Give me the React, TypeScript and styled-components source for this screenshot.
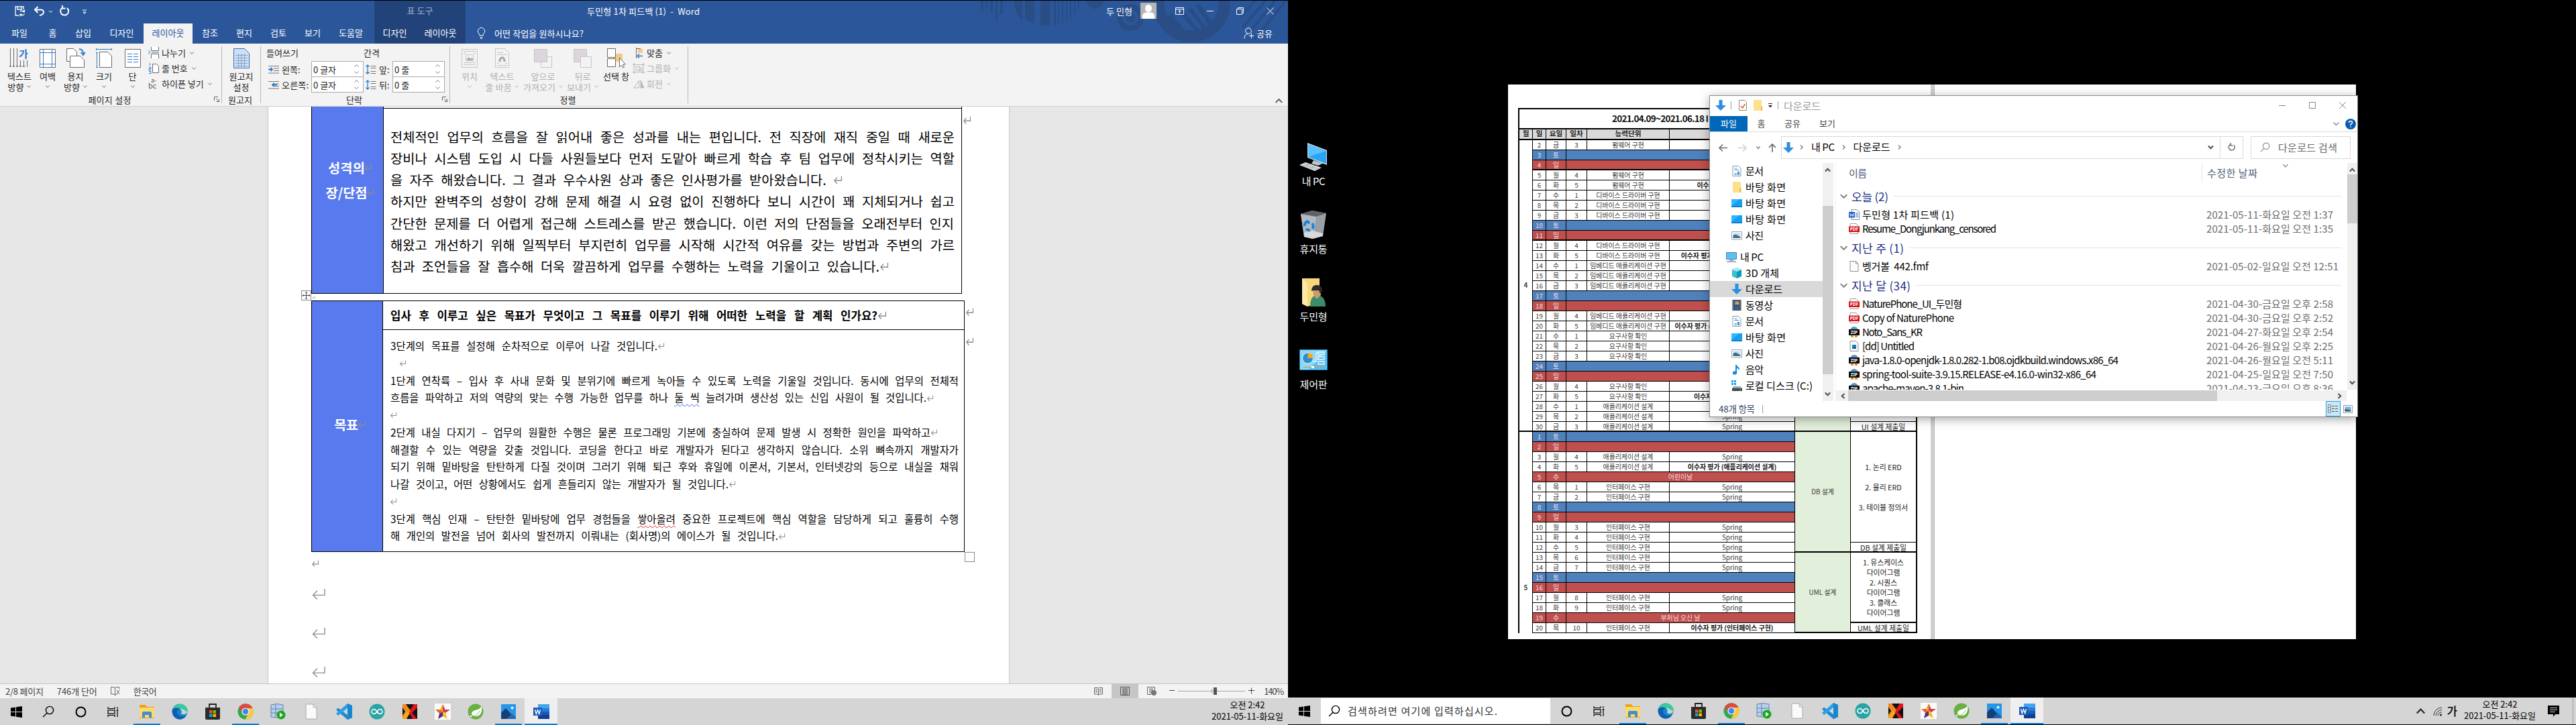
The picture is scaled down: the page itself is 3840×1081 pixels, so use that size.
import React, { ReactNode, useLayoutEffect, useRef, useState } from 'react';
import styled, { createGlobalStyle } from 'styled-components';

const Global = createGlobalStyle`
  html, body { margin: 0; padding: 0; background: #000; }
  * { box-sizing: border-box; }
  body { font-family: "Noto Sans CJK KR", "Noto Sans", sans-serif; font-size: 13px; line-height: 1; overflow: hidden; }
  svg { display: block; flex: none; overflow: visible; }
`;

/* ---------- text that spreads to a given width ---------- */
const FitSpan = styled.span`
  display: inline-block;
  flex: none;
  justify-self: start;
  white-space: pre;
`;

function Fit({ w, words, children }: { w: number; words?: boolean; children: ReactNode }) {
  const ref = useRef<HTMLSpanElement>(null);
  const [gap, setGap] = useState(0);
  useLayoutEffect(() => {
    const el = ref.current;
    if (!el) return;
    const text = el.textContent || '';
    const slots = words ? text.split(' ').length - 1 : text.length - 1;
    if (slots > 0) setGap((w - el.getBoundingClientRect().width) / slots);
  }, []);
  return (
    <FitSpan ref={ref} style={words ? { wordSpacing: gap } : { letterSpacing: gap }}>
      {children}
    </FitSpan>
  );
}

/* ---------- shell ---------- */
const Screens = styled.div`
  display: flex;
  width: 3840px;
  height: 1081px;
  background: #000;
`;
const Monitor = styled.div`
  width: 1920px;
  height: 1081px;
  display: flex;
  flex-direction: column;
`;

/* ---------- Word: title bar and tabs ---------- */
const TitleArea = styled.header`
  position: relative;
  margin-top: 1px;
  height: 64px;
  background: #2b579a;
  color: #fff;
  overflow: hidden;
`;
const TitleArt = styled.svg`
  position: absolute;
  left: 1440px;
  top: 0;
`;
const TitleRow = styled.div`
  position: relative;
  display: flex;
  height: 34px;
`;
const QuickAccess = styled.div`
  width: 558px;
  display: flex;
  align-items: center;
  padding: 0 0 2px 22px;
`;
const ContextTitle = styled.div`
  width: 136px;
  background: #22437a;
  color: #a3b4d0;
  display: flex;
  justify-content: center;
  line-height: 30px;
`;
const DocTitle = styled.div`
  width: 955px;
  padding-left: 181px;
  line-height: 31px;
`;
const Account = styled.div`
  display: flex;
  align-items: center;
  height: 30px;
  gap: 12px;
`;
const Caption = styled.div`
  display: flex;
  align-items: center;
  height: 30px;
  padding-left: 28px;
  gap: 34px;
`;
const TabRow = styled.nav`
  position: relative;
  display: flex;
  height: 30px;
`;
const Tab = styled.div<{ $w: number; $on?: boolean; $ctx?: boolean }>`
  width: ${p => p.$w}px;
  line-height: 28px;
  text-align: center;
  white-space: nowrap;
  background: ${p => (p.$on ? '#f3f3f3' : p.$ctx ? '#22437a' : 'transparent')};
  color: ${p => (p.$on ? '#2b579a' : '#fff')};
`;
const TabGap = styled.div<{ $w: number }>`
  width: ${p => p.$w}px;
`;
const TellMe = styled.div`
  display: flex;
  align-items: center;
  gap: 13px;
  width: 1160px;
  padding-left: 17px;
  padding-bottom: 2px;
`;
const Share = styled.div`
  display: flex;
  align-items: center;
  gap: 4px;
  padding-bottom: 2px;
`;

/* ---------- Word: ribbon ---------- */
const Ribbon = styled.div`
  display: flex;
  height: 94px;
  background: #f3f3f3;
  border-bottom: 1px solid #d0d0d0;
  color: #262626;
`;
const Group = styled.section<{ $w: number }>`
  width: ${p => p.$w}px;
  height: 85px;
  margin-top: 4px;
  border-right: 1px solid #b9b9b9;
`;
const GroupBody = styled.div<{ $pad?: number }>`
  display: flex;
  height: 70px;
  padding-left: ${p => p.$pad || 0}px;
`;
const GroupFoot = styled.div`
  display: grid;
  grid-template-columns: 1fr auto 1fr;
  height: 18px;
  align-items: center;
  padding: 0 3px 0 0;
  & > svg { justify-self: end; }
`;
const BigButton = styled.div<{ $w: number; $off?: boolean; $ml?: number }>`
  width: ${p => p.$w}px;
  margin-left: ${p => p.$ml || 0}px;
  padding-top: 3px;
  display: flex;
  flex-direction: column;
  align-items: center;
  color: ${p => (p.$off ? '#b1b1b1' : '#262626')};
  & > svg { margin-bottom: 3px; }
`;
const BigLine = styled.div`
  display: flex;
  align-items: center;
  gap: 5px;
  height: 16px;
  line-height: 15px;
  white-space: nowrap;
`;
const SmallColumn = styled.div<{ $pad?: number }>`
  margin-top: -2px;
  padding-left: ${p => p.$pad || 0}px;
`;
const SmallRow = styled.div<{ $off?: boolean }>`
  display: flex;
  align-items: center;
  height: 23px;
  gap: 3px;
  white-space: nowrap;
  color: ${p => (p.$off ? '#b1b1b1' : '#262626')};
  & > svg:last-child { margin-left: 3px; }
`;
const FieldColumn = styled.div<{ $w: number }>`
  width: ${p => p.$w}px;
`;
const FieldTitle = styled.div`
  height: 22px;
  line-height: 20px;
`;
const FieldRow = styled.div<{ $label: number }>`
  display: grid;
  grid-template-columns: 20px ${p => p.$label}px 78px;
  align-items: center;
  height: 23px;
  padding-left: 3px;
  white-space: nowrap;
`;
const Spin = styled.div`
  display: flex;
  justify-content: space-between;
  align-items: center;
  height: 24px;
  background: #fff;
  border: 1px solid #ababab;
  padding: 0 6px 0 2px;
  color: #222;
`;
const CollapseRibbon = styled.div`
  display: flex;
  align-items: flex-end;
  margin-left: auto;
  padding: 0 8px 2px 0;
`;

/* ---------- Word: document ---------- */
const Workspace = styled.main`
  height: 860px;
  background: #e6e6e6;
  overflow: hidden;
`;
const Page = styled.article`
  width: 1106px;
  height: 860px;
  margin-left: 399px;
  padding-left: 64px;
  background: #fff;
  border: solid #c6c6c6;
  border-width: 0 1px;
  color: #000;
`;
const TableLine = styled.div`
  position: relative;
  display: flex;
`;
const DocTable = styled.div<{ $w: number; $h: number; $side: number; $top?: boolean }>`
  display: grid;
  grid-template-columns: ${p => p.$side}px 1fr;
  width: ${p => p.$w}px;
  height: ${p => p.$h}px;
  border: solid #000;
  border-width: ${p => (p.$top ? 1 : 0)}px 1px 1px 1px;
`;
const SideCell = styled.div`
  background: #587aee;
  color: #fff;
  font-weight: 700;
  font-size: 19.8px;
  line-height: 37px;
  display: flex;
  flex-direction: column;
  align-items: center;
  border-right: 1px solid #000;
  padding-right: 2px;
`;
const SideLine = styled.div`
  display: flex;
  align-items: center;
  padding-left: 9px;
`;
const TextCell = styled.div`
  padding: 26px 0 0 10px;
  margin-top: 2px;
  border-top: 1px solid #000;
  font-size: 19.8px;
`;
const Line = styled.div<{ $h: number; $in?: number }>`
  display: flex;
  align-items: center;
  height: ${p => p.$h}px;
  line-height: ${p => p.$h}px;
  padding-left: ${p => p.$in || 0}px;
  gap: 1px;
`;
const GoalHead = styled.div`
  height: 43px;
  padding-left: 11px;
  border-bottom: 1px solid #000;
  font-size: 16.8px;
  font-weight: 700;
`;
const GoalBody = styled.div`
  padding: 11px 0 0 11px;
  font-size: 15.4px;
`;
const Wavy = styled.span<{ $c: string }>`
  text-decoration: underline wavy ${p => p.$c} 1.3px;
  text-underline-offset: 3px;
  text-decoration-skip-ink: none;
`;
const RowMarks = styled.div<{ $top: number; $gap?: number }>`
  display: flex;
  flex-direction: column;
  gap: ${p => p.$gap || 0}px;
  padding: ${p => p.$top}px 0 0 2px;
`;
const MoveHandle = styled.div`
  position: absolute;
  left: -15px;
  top: 274px;
  width: 15px;
  height: 15px;
  background: #fff;
  border: 1px solid #8a8a8a;
`;
const SizeHandle = styled.div`
  position: absolute;
  left: 974px;
  top: 375px;
  width: 15px;
  height: 15px;
  border: 1px solid #8a8a8a;
  background: #fff;
`;
const BetweenTables = styled.div`
  height: 10px;
  padding: 3px 0 0 2px;
`;
const Tail = styled.div`
  padding: 12px 0 0 1px;
  & > svg { margin-bottom: 41px; }
  & > svg:first-child { margin-bottom: 32px; }
`;

/* ---------- Word: status bar ---------- */
const StatusBar = styled.footer`
  display: flex;
  align-items: center;
  height: 22px;
  background: #f3f3f3;
  border-top: 1px solid #c6c6c6;
  color: #444;
  padding: 0 7px 1px 8px;
  white-space: nowrap;
`;
const StatusLeft = styled.div`
  display: flex;
  align-items: center;
  gap: 20px;
  flex: 1;
`;
const ViewButton = styled.div<{ $on?: boolean }>`
  display: flex;
  align-items: center;
  justify-content: center;
  width: 40px;
  height: 22px;
  background: ${p => (p.$on ? '#c6c6c6' : 'transparent')};
`;
const Zoom = styled.div`
  display: flex;
  align-items: center;
  padding-left: 6px;
`;
const PercentText = styled.div`
  margin-left: 14px;
`;

/* ---------- taskbar ---------- */
const Bar = styled.div`
  display: flex;
  height: 40px;
  background: #d5d5d5;
  color: #000;
`;
const Slot = styled.div<{ $w?: number }>`
  width: ${p => p.$w || 48}px;
  display: flex;
  align-items: center;
  justify-content: center;
`;
const AppSlot = styled.div<{ $on?: boolean; $open?: boolean }>`
  width: 49px;
  height: 40px;
  display: flex;
  flex-direction: column;
  align-items: center;
  justify-content: space-between;
  padding-top: 8px;
  background: ${p => (p.$on ? '#efefef' : 'transparent')};
  &::after {
    content: '';
    width: ${p => (p.$on ? 49 : 40)}px;
    height: 2px;
    background: ${p => (p.$on || p.$open ? '#0a78d4' : 'transparent')};
  }
`;
const AppStrip = styled.div`
  display: flex;
  margin-left: 2px;
`;
const SearchBox = styled.div`
  display: flex;
  align-items: center;
  gap: 11px;
  width: 342px;
  height: 38px;
  margin: 1px 0 0 1px;
  padding: 0 0 1px 11px;
  background: #fff;
  font-size: 15px;
  color: #333;
`;
const Tray = styled.div`
  display: flex;
  margin-left: auto;
  align-items: center;
`;
const Clock = styled.div<{ $right: number }>`
  display: flex;
  flex-direction: column;
  align-items: center;
  line-height: 17px;
  padding-bottom: 4px;
  margin-right: ${p => p.$right}px;
`;
const Ime = styled.div`
  font-size: 17px;
  font-weight: 500;
  margin: 0 10px 0 7px;
  line-height: 36px;
`;
const Notice = styled.div`
  display: flex;
  height: 40px;
  width: 38px;
  align-items: center;
  border-right: 1px solid #9a9a9a;
  margin-right: 4px;
`;

/* ---------- desktop ---------- */
const Desktop = styled.div`
  position: relative;
  height: 1040px;
  background: #000;
  overflow: hidden;
`;
const DesktopIcons = styled.div`
  width: 76px;
  padding-top: 212px;
`;
const DesktopIcon = styled.div`
  display: flex;
  flex-direction: column;
  align-items: center;
  height: 101px;
  color: #fff;
  font-size: 15px;
  line-height: 28px;
`;
const Photo = styled.div`
  position: absolute;
  left: 328px;
  top: 126px;
  width: 1264px;
  height: 827px;
  background: #fff;
  display: flex;
`;
const PhotoPage = styled.div`
  width: 630px;
  padding: 35px 0 0 15px;
`;
const PhotoDivider = styled.div`
  width: 6px;
  background: #cfcfcf;
  border-right: 1px solid #bdbdbd;
`;
const Calendar = styled.div`
  display: grid;
  grid-template-columns: 20px 20px 30px 31px 123px 187px 83px 99px;
  grid-template-rows: 30px 16px repeat(49, 15px);
  width: 595px;
  border-left: 2px solid #000;
  border-top: 2px solid #000;
  font-size: 9.9px;
  line-height: 15px;
  color: #3c3c3c;
`;
const Cell = styled.div<{
  $c: number; $r: number; $cs?: number; $rs?: number; $bg?: string; $fg?: string;
  $b?: boolean; $thick?: boolean; $pt?: number; $open?: boolean; $center?: boolean; $rt?: boolean; $head?: boolean;
}>`
  grid-column: ${p => p.$c} / span ${p => p.$cs || 1};
  grid-row: ${p => p.$r} / span ${p => p.$rs || 1};
  background: ${p => p.$bg || 'transparent'};
  color: ${p => p.$fg || 'inherit'};
  font-weight: ${p => (p.$b ? 700 : 400)};
  border-right: ${p => (p.$rt ? 2 : 1)}px solid #000;
  border-bottom: ${p => (p.$open ? 0 : p.$thick ? 2 : 1)}px solid #000;
  padding-top: ${p => p.$pt || 0}px;
  text-align: center;
  white-space: nowrap;
  min-width: 0;
  min-height: 0;
  ${p => p.$rt && 'font-size: 10.8px; color: #222;'}
  ${p => p.$head && 'font-size: 10.6px; line-height: 12px;'}
  ${p => p.$center && 'display: flex; flex-direction: column; justify-content: center;'}
`;
const CalTitle = styled.div`
  grid-column: 1 / span 8;
  grid-row: 1;
  border-bottom: 2px solid #000;
  border-right: 2px solid #000;
  padding-left: 138px;
  font-size: 13.5px;
  font-weight: 700;
  line-height: 27px;
  color: #111;
`;
const Spaced = styled.div`
  line-height: 30px;
`;

/* ---------- explorer ---------- */
const Explorer = styled.div`
  position: absolute;
  left: 628px;
  top: 142px;
  width: 967px;
  height: 480px;
  background: #fff;
  border: 1px solid #8c8c8c;
  box-shadow: 0 3px 14px rgba(0, 0, 0, 0.35);
  font-size: 15px;
  color: #000;
  white-space: nowrap;
`;
const ExTitle = styled.div`
  display: flex;
  align-items: center;
  height: 30px;
  padding: 0 17px 2px 8px;
  color: #999;
`;
const ExDivider = styled.i<{ $l: number; $r: number }>`
  width: 1px;
  height: 12px;
  background: #9a9a9a;
  margin: 0 ${p => p.$r}px 0 ${p => p.$l}px;
`;
const ExWinButtons = styled.div`
  display: flex;
  align-items: center;
  gap: 35px;
  margin-left: auto;
`;
const ExTabs = styled.div`
  display: flex;
  height: 24px;
  font-size: 13px;
  line-height: 22px;
  color: #444;
  border-bottom: 1px solid #dadbdc;
  margin-bottom: 6px;
`;
const ExTab = styled.div<{ $w: number; $on?: boolean }>`
  width: ${p => p.$w}px;
  height: 23px;
  text-align: center;
  background: ${p => (p.$on ? '#0067b8' : 'transparent')};
  color: ${p => (p.$on ? '#fff' : '#444')};
`;
const ExTabsEnd = styled.div`
  display: flex;
  align-items: center;
  gap: 9px;
  margin-left: auto;
  padding-right: 2px;
`;
const AddressRow = styled.div`
  display: flex;
  height: 34px;
  align-items: center;
  padding-left: 13px;
  margin-bottom: 6px;
`;
const NavArrows = styled.div`
  display: flex;
  align-items: center;
  width: 93px;
`;
const AddressBox = styled.div`
  display: flex;
  align-items: center;
  width: 689px;
  height: 34px;
  border: 1px solid #d9d9d9;
  padding: 0 0 1px 2px;
`;
const Crumb = styled.span`
  margin: 0 10px 2px 11px;
`;
const AddressEnd = styled.div`
  display: flex;
  align-items: center;
  margin-left: auto;
  height: 33px;
`;
const Refresh = styled.div`
  display: flex;
  align-items: center;
  justify-content: center;
  width: 34px;
  height: 33px;
  margin-left: 9px;
  border-left: 1px solid #d9d9d9;
`;
const ExSearch = styled.div`
  display: flex;
  align-items: center;
  width: 149px;
  height: 34px;
  gap: 12px;
  margin-left: 11px;
  padding: 0 0 2px 13px;
  border: 1px solid #d9d9d9;
  color: #6d6d6d;
`;
const ExBody = styled.div`
  display: flex;
  height: 355px;
`;
const NavPane = styled.div`
  width: 168px;
`;
const NavItem = styled.div<{ $root?: boolean; $on?: boolean }>`
  display: flex;
  align-items: center;
  gap: 5px;
  height: 24px;
  width: 168px;
  margin-top: ${p => (p.$root ? 8 : 0)}px;
  padding: 0 0 1px ${p => (p.$root ? 24 : 32)}px;
  background: ${p => (p.$on ? '#d9d9d9' : 'transparent')};
`;
const VScroll = styled.div<{ $h: number; $top: number; $len: number; $w: number }>`
  width: ${p => p.$w}px;
  height: ${p => p.$h}px;
  background: #f0f0f0;
  display: flex;
  flex-direction: column;
  align-items: center;
  justify-content: space-between;
  padding: 6px 0;
  position: relative;
  &::before {
    content: '';
    position: absolute;
    left: 0;
    top: ${p => p.$top}px;
    width: 100%;
    height: ${p => p.$len}px;
    background: #cdcdcd;
  }
`;
const ListArea = styled.div`
  width: 779px;
  border-left: 1px solid #f0f0f0;
  margin-left: 3px;
`;
const ListTop = styled.div`
  display: flex;
  height: 338px;
`;
const List = styled.div`
  width: 762px;
  height: 338px;
  overflow: hidden;
`;
const ListHead = styled.div`
  display: flex;
  height: 29px;
  line-height: 29px;
  padding-left: 19px;
  color: #4c607a;
`;
const HeadName = styled.div`
  width: 526px;
`;
const HeadDate = styled.div`
  position: relative;
  border-left: 1px solid #e5e5e5;
  padding-left: 7px;
  flex: 1;
  & > svg { position: absolute; left: 120px; top: 0; }
`;
const GroupRow = styled.div<{ $first?: boolean }>`
  display: flex;
  align-items: center;
  height: 30px;
  margin-top: ${p => (p.$first ? 6 : 3.5)}px;
  margin-bottom: 1.5px;
  padding: 0 9px 1px 6px;
  gap: 6px;
  font-size: 17px;
  color: #1e3287;
  &::after {
    content: '';
    flex: 1;
    height: 1px;
    background: #e2e2e2;
    margin-left: 2px;
  }
`;
const FileRow = styled.div`
  display: grid;
  grid-template-columns: 20px 513px 1fr;
  align-items: center;
  height: 21px;
  line-height: 20px;
  padding-left: 19px;
`;
const FileDate = styled.span`
  color: #6d6d6d;
`;
const HScroll = styled.div`
  display: flex;
  align-items: center;
  justify-content: space-between;
  width: 761px;
  height: 16px;
  margin-top: 1px;
  padding: 0 6px;
  background: linear-gradient(#cdcdcd, #cdcdcd) 18px 0 / 550px 100% no-repeat, #f0f0f0;
`;
const ExStatus = styled.div`
  display: flex;
  align-items: center;
  height: 23px;
  padding-left: 13px;
  font-size: 13.5px;
  color: #33475e;
`;
const ViewIcon = styled.div<{ $on?: boolean }>`
  display: flex;
  align-items: center;
  justify-content: center;
  width: 22px;
  height: 23px;
  background: ${p => (p.$on ? '#cce8f6' : 'transparent')};
  border: ${p => (p.$on ? '1px solid #26a0da' : 'none')};
`;

/* ---------- small drawings ---------- */
const Chevron = ({ c = '#666', s = 6, d = 'down' }: { c?: string; s?: number; d?: string }) => {
  const rot: Record<string, number> = { down: 0, up: 180, left: 90, right: -90 };
  return (
    <svg width={s} height={s} viewBox="0 0 8 8">
      <path d="M0.5 2.2L4 5.8L7.5 2.2" fill="none" stroke={c} strokeWidth={1.3} transform={`rotate(${rot[d]} 4 4)`} />
    </svg>
  );
};
const BoldChevron = ({ d }: { d: string }) => {
  const rot: Record<string, number> = { down: 0, up: 180, left: 90, right: -90 };
  return (
    <svg width={9} height={9} viewBox="0 0 8 8">
      <path d="M0.8 2.2L4 5.6L7.2 2.2" fill="none" stroke="#505050" strokeWidth={1.8} transform={`rotate(${rot[d]} 4 4)`} />
    </svg>
  );
};
const Return = ({ w = 10, h = 11 }: { w?: number; h?: number }) => (
  <svg width={w} height={h} viewBox="0 0 20 18" preserveAspectRatio="none">
    <path d="M19 1V11H2M8 4L1.5 11L8 17.5" fill="none" stroke="#8c8c8c" strokeWidth={w > 15 ? 1.4 : 2.2} />
  </svg>
);
const Launcher = () => (
  <svg width="8" height="8" viewBox="0 0 8 8">
    <path d="M0.5 6V0.5H6M3 3L7 7M7.5 3.5V7.5H3.5" fill="none" stroke="#666" />
  </svg>
);
const Spinner = () => (
  <svg width="7" height="16" viewBox="0 0 7 16">
    <path d="M0.5 4.5L3.5 1.5L6.5 4.5M0.5 11.5L3.5 14.5L6.5 11.5" fill="none" stroke="#777" />
  </svg>
);

const TitleDecoration = () => (
  <TitleArt width="480" height="64" viewBox="1440 0 480 64">
    <g fill="#294d84">
      <path d="M1462 0h4v16h-4zM1469 0h3v12h-3zM1476 0h4v18h-4zM1484 0h3v32h-3zM1491 0h4v20h-4z" />
      <path d="M1511 0H1524V29Q1514 22 1511 0zM1528 0H1542V34L1528 28zM1551 0H1565V37H1551zM1571 0h3v36h-3zM1577 0h2v35h-2zM1583 0h2v33h-2zM1589 0h2v30h-2zM1595 0h2v26h-2zM1601 0h2v21h-2zM1607 0h2v12h-2z" />
      <circle cx="1632" cy="-1" r="13" />
      <circle cx="1685" cy="25" r="7" />
      <path d="M1760 20L1790 56L1796 54L1764 14zM1771 14L1799 51L1804 48L1776 10zM1782 8L1807 44L1811 38L1788 4zM1740 24L1766 56L1776 57L1746 18z" />
    </g>
    <circle cx="1685" cy="25" r="16" fill="none" stroke="#294d84" strokeWidth="8" />
    <circle cx="1776" cy="4" r="49" fill="none" stroke="#294d84" strokeWidth="17" />
    <path d="M1852 40L1890 -4M1862 48L1904 -4M1870 58L1920 -4M1850 24L1874 -4" stroke="#294d84" strokeWidth="4" />
  </TitleArt>
);

const SheetIcon = ({ off, children, w = 24 }: { off?: boolean; children?: ReactNode; w?: number }) => (
  <svg width={w} height="30" viewBox={`0 0 ${w} 30`} fill="none" stroke={off ? '#c9c5c9' : '#6a6a6a'}>
    {children}
  </svg>
);

/* ---------- taskbar drawings ---------- */
const WinLogo = () => (
  <svg width="17" height="17" viewBox="0 0 17 17">
    <path d="M0 2.5L7 1.5V8H0zM8 1.3L17 0V8H8zM0 9H7V15.5L0 14.5zM8 9H17V17L8 15.7z" />
  </svg>
);
const Magnifier = ({ c = '#000', s = 18 }: { c?: string; s?: number }) => (
  <svg width={s} height={s} viewBox="0 0 18 18" fill="none" stroke={c} strokeWidth={1.4}>
    <circle cx="11" cy="7" r="5.6" />
    <path d="M7 11.2L1 17" />
  </svg>
);
const Cortana = () => (
  <svg width="17" height="17" viewBox="0 0 17 17">
    <circle cx="8.5" cy="8.5" r="7" fill="none" stroke="#000" strokeWidth="2" />
  </svg>
);
const TaskView = () => (
  <svg width="17" height="17" viewBox="0 0 17 17" fill="none" stroke="#000" strokeWidth="1.2">
    <path d="M1 1V3.5H11V1M1 16V13.5H11V16M1 5.8H11V11.2H1zM15 1V4M15 8V16" />
    <path d="M13.8 5h2.4v2.4h-2.4z" fill="#000" stroke="none" />
  </svg>
);
const apps: { open?: boolean; on?: boolean; art: ReactNode }[] = [
  { open: true, art: <g><path d="M1 2h9l2 3h11v17H1z" fill="#e8a317" /><path d="M1 6h22v15H1z" fill="#ffd866" /><path d="M5 21v-7q0-2 2-2h10q2 0 2 2v7h-4v-4H9v4z" fill="#3d8fd8" /></g> },
  { art: <g><circle cx="12" cy="12" r="11.5" fill="#1583d0" /><path d="M1 9C3 1 12-1 18 2c5 3 7 8 5 12-2 3-7 3-9 1 2-4 0-8-5-8-4 0-7 1-8 2z" fill="#3cc8a0" /><path d="M1 9C5 5 10 6 12 8c-4 1-5 5-3 8 3 4 8 4 12 2-3 5-9 7-14 4C2 19 0 14 1 9z" fill="#0f5fb0" /><path d="M14 15c2-3 0-6-2-7 4-1 7 3 11 4 0 4-6 5-9 3z" fill="#d5d5d5" opacity="0.9" /></g> },
  { art: <g><path d="M7 6V1h10v5" fill="none" stroke="#222" strokeWidth="1.8" /><path d="M1 6h22v16q0 2-2 2H3q-2 0-2-2z" fill="#2b2b2b" /><path d="M7 10h4.5v4.5H7z" fill="#f25022" /><path d="M12.5 10H17v4.5h-4.5z" fill="#7fba00" /><path d="M7 15.5h4.5V20H7z" fill="#00a4ef" /><path d="M12.5 15.5H17V20h-4.5z" fill="#ffb900" /></g> },
  { open: true, art: <g><circle cx="12" cy="12" r="11.5" fill="#2fa84f" /><path d="M2 6A11.5 11.5 0 0 1 22.5 7H12L7 14z" fill="#dd4b3e" /><path d="M22.5 7A11.5 11.5 0 0 1 11.5 23.5L17 14 15 7z" fill="#fdc93a" /><circle cx="12" cy="12" r="5.6" fill="#fff" /><circle cx="12" cy="12" r="4.4" fill="#4285f4" /></g> },
  { art: <g><path d="M1 2q9-3 18 0v18q-9 2-18 0z" fill="#b9cfe8" stroke="#5c83b4" strokeWidth="1" /><path d="M1 8h18M1 14h18M8 1v19" stroke="#5c83b4" strokeWidth="1" /><circle cx="16" cy="17" r="6.5" fill="#17a817" /><path d="M14 13.5l5 3.5-5 3.5z" fill="#fff" /></g> },
  { art: <g><path d="M4 1h11l5 5v17H4z" fill="#fafafa" stroke="#9a9a9a" strokeWidth="0.8" /><path d="M15 1v5h5" fill="none" stroke="#9a9a9a" strokeWidth="0.8" /></g> },
  { art: <g><path d="M17 0L24 3V21L17 24L0 9.500L3 6.500L17 17z" fill="#1f8ad2" /><path d="M0 15L17 0V7L3 18z" fill="#2a9fe8" /><path d="M17 7v10l-6-5z" fill="#d5d5d5" /><path d="M17 0l7 3v18l-7 3z" fill="#1a86cf" /></g> },
  { art: <g><circle cx="12" cy="12" r="11.5" fill="#2aa3a5" /><path d="M12 12c-2-3-3-3.5-4.5-3.5a3.500 3.500 0 0 0 0 7c1.500 0 2.500-.5 4.500-3.500s3-3.500 4.500-3.500a3.500 3.500 0 0 1 0 7C15 15.500 14 15 12 12z" fill="none" stroke="#fff" strokeWidth="1.5" /></g> },
  { art: <g><path d="M1 1h22v22H1z" fill="#111" /><path d="M1 1h5l8 11-8 11H1V18l4-6-4-6z" fill="#f08a1d" /><path d="M1 23L7 11l4 4-4 8z" fill="#f7a51c" /><path d="M23 1h-5l-6 9 3 4 8-8z" fill="#e3151c" /><path d="M13 11l10 12h-7l-5-9z" fill="#d3131b" /></g> },
  { art: <g><path d="M0 0h24v24H0z" fill="#fafafa" /><path d="M12 1l3 8-3 3-4-3z" fill="#f2b01e" /><path d="M12 1l3.5 8H23l-7 5-4-2z" fill="#d93a4a" /><path d="M1 9h7l4 3-5 3z" fill="#e8662a" /><path d="M7 15l5-3v7l-7 4z" fill="#5a2a86" /><path d="M12 12l4 2 3 9-7-4z" fill="#f0c020" /></g> },
  { art: <g><circle cx="12" cy="12" r="11.5" fill="#68b042" /><path d="M21 4c1 8-1 15-9 15-3 0-5-1-6-3 0-8 10-4 15-12z" fill="#fff" /><path d="M3 20c6 1 12-3 15-9" fill="none" stroke="#68b042" strokeWidth="1" /><circle cx="5" cy="19" r="1.3" fill="#fff" /></g> },
  { open: true, art: <g><path d="M1 1h22v22H1z" fill="#2496e8" /><path d="M1 14l7-7 15 16H1z" fill="#173f77" /><path d="M9 23l8-8 6 6v2z" fill="#2664b5" /><circle cx="17.5" cy="6.5" r="2" fill="#e8f6ff" /></g> },
  { on: true, art: <g><path d="M7 1h17v22H7z" fill="#2b7cd3" /><path d="M7 1h17v6H7z" fill="#41a5ee" /><path d="M7 12h17v5.5H7z" fill="#185abd" /><path d="M7 17h17v6H7z" fill="#103f91" /><path d="M0 6h13v12H0z" fill="#185abd" /><path d="M2.5 9l1.8 6.5L6.500 9.500l2.200 6L10.500 9" fill="none" stroke="#fff" strokeWidth="1.4" /></g> },
];
const Apps = () => (
  <AppStrip>
    {apps.map((a, i) => (
      <AppSlot key={i} $on={a.on} $open={a.open}>
        <svg width="24" height="24" viewBox="0 0 24 24">{a.art}</svg>
      </AppSlot>
    ))}
  </AppStrip>
);

/* ---------- explorer drawings ---------- */
const DownArrow = ({ s = 16 }: { s?: number }) => (
  <svg width={s} height={s} viewBox="0 0 16 16">
    <path d="M5.5 0h5v8H16l-8 8-8-8h5.5z" fill="#2f8de0" />
  </svg>
);
const Icons: Record<string, ReactNode> = {
  doc: <g><path d="M2 .5h8.5L14 4v11.5H2z" fill="#fff" stroke="#8b98a5" /><path d="M4.5 4h4M4.5 6.5h7M4.5 11.5h3.5M4.5 13.5h3.5" stroke="#2c93dd" /><path d="M9 9h3v5H9z" fill="#4a90c8" /></g>,
  folder: <g><path d="M2 0h12v16H2z" fill="#ffe08a" /><path d="M12 10l2.5-1V16H12z" fill="#e9bb4a" /></g>,
  desk: <g><path d="M0 2h16v12H0z" fill="#12a0f5" /><path d="M0 12.5h16V14H0z" fill="#0b6fb5" /><path d="M0 12L12 2H0z" fill="#35b5ff" /></g>,
  photo: <g><path d="M.5 2.5h15V14H.5z" fill="#fff" stroke="#98a2ab" /><path d="M2.5 4.5h11V12h-11z" fill="#bfe0f5" /><path d="M2.5 8l4-1.5 7 4V12h-11z" fill="#3f6f84" /></g>,
  pc: <g><path d="M.5 1.5h15v10H.5z" fill="#5cc0f5" stroke="#3a86b5" /><path d="M5 12.5h6V14H5zM1 14.5h14V16H1z" fill="#8a99a5" /></g>,
  cube: <g><path d="M8 0l7 3v10l-7 3-7-3V3z" fill="#3bc0d0" /><path d="M8 6l7-3v10l-7 3z" fill="#0f9bb5" /><path d="M1 3l7-3 7 3-7 3z" fill="#a5e8ee" /></g>,
  down: <path d="M5.5 0h5v8H16l-8 8-8-8h5.5z" fill="#2f8de0" />,
  film: <g><path d="M1.5 0h13v16h-13z" fill="#3b3b3b" /><path d="M4.5 1h7v6.5h-7z" fill="#3f7fc8" /><path d="M4.5 8.500h7V15h-7z" fill="#2e5fa5" /><path d="M5.5 5l3-3 3 3v2h-6z" fill="#e0a53a" /><path d="M3 1v14M13 1v14" stroke="#ddd" strokeDasharray="1.5 1.5" /></g>,
  music: <g><path d="M7 1v11" stroke="#1a8fe0" strokeWidth="2" /><path d="M7 0c1 4 6 4 5 9-1-2-3-3-5-3z" fill="#1a8fe0" /><ellipse cx="5" cy="13" rx="3.2" ry="2.7" fill="#1a8fe0" /></g>,
  disk: <g><path d="M0 0h3v3H0zM4 0h3v3H4zM0 4h3v3H0zM4 4h3v3H4z" fill="#18a5ee" /><path d="M3 9h10l3 3v4H1v-4z" fill="#9aa3aa" /><path d="M1 12h15v4H1z" fill="#40474d" /><path d="M12 13.5h2v1h-2z" fill="#5de05d" /></g>,
  word: <g><path d="M4 .5h8L15.5 4v11.5H4z" fill="#fff" stroke="#7f8b98" /><path d="M10 6h4M10 8.5h4M10 11h4" stroke="#2b6cc4" /><path d="M0 4h9v8.5H0z" fill="#1f5fbf" /><path d="M1.5 6l1.3 4.5L4.5 7l1.7 3.5L7.5 6" fill="none" stroke="#fff" /></g>,
  file: <g><path d="M2 .5h8.5L14 4v11.5H2z" fill="#fbfbfb" stroke="#8f8f8f" /><path d="M10.5.5V4H14" fill="none" stroke="#8f8f8f" /></g>,
  image: <g><path d="M2 .5h8.5L14 4v11.5H2z" fill="#fbfbfb" stroke="#8f8f8f" /><path d="M5 6h6v6H5z" fill="#1b7fd0" /><path d="M5 12l3-3 3 3z" fill="#0d4a86" /></g>,
};
const IconText = styled.text`
  font: 700 6.5px "Noto Sans", sans-serif;
  fill: #fff;
  text-anchor: middle;
`;
const FileIcon = ({ k }: { k: string }) => (
  <svg width="16" height="16" viewBox="0 0 16 16">
    {k === 'pdf' ? (
      <g>
        <path d="M2 .5h9L14 4v11.5H2z" fill="#fff" stroke="#9a9a9a" />
        <path d="M0 4.5h16V13H0z" fill="#d8131b" />
        <IconText x="8" y="11.2">PDF</IconText>
      </g>
    ) : k === 'zip' ? (
      <g>
        <ellipse cx="8" cy="6" rx="6" ry="6" fill="#5c93b8" />
        <path d="M3 13h4v3H3zM9 13h4v3H9z" fill="#e59a2c" />
        <path d="M0 4h16v9H0z" fill="#0c0c0c" />
        <IconText x="8" y="11">ZIP</IconText>
      </g>
    ) : (
      Icons[k]
    )}
  </svg>
);

/* ---------- data ---------- */
const navItems: [string, string, number][] = [
  ['doc', '문서', 27], ['folder', '바탕 화면', 60], ['desk', '바탕 화면', 60], ['desk', '바탕 화면', 60], ['photo', '사진', 27],
  ['pc', '내 PC', 35], ['cube', '3D 개체', 50], ['down', '다운로드', 55], ['film', '동영상', 41], ['doc', '문서', 27],
  ['desk', '바탕 화면', 60], ['photo', '사진', 27], ['music', '음악', 27], ['disk', '로컬 디스크 (C:)', 100],
];
type FileEntry = [string, string, number, string, number];
const fileGroups: { title: string; w: number; files: FileEntry[] }[] = [
  { title: '오늘 (2)', w: 55, files: [
    ['word', '두민형 1차 피드백 (1)', 137, '2021-05-11-화요일 오전 1:37', 189],
    ['pdf', 'Resume_Dongjunkang_censored', 200, '2021-05-11-화요일 오전 1:35', 189],
  ] },
  { title: '지난 주 (1)', w: 78, files: [['file', '벵거볼  442.fmf', 99, '2021-05-02-일요일 오전 12:51', 197]] },
  { title: '지난 달 (34)', w: 88, files: [
    ['pdf', 'NaturePhone_UI_두민형', 149, '2021-04-30-금요일 오후 2:58', 189],
    ['pdf', 'Copy of NaturePhone', 137, '2021-04-30-금요일 오후 2:52', 189],
    ['zip', 'Noto_Sans_KR', 90, '2021-04-27-화요일 오후 2:54', 189],
    ['image', '[dd] Untitled', 78, '2021-04-26-월요일 오후 2:25', 189],
    ['zip', 'java-1.8.0-openjdk-1.8.0.282-1.b08.ojdkbuild.windows.x86_64', 382, '2021-04-26-월요일 오전 5:11', 189],
    ['zip', 'spring-tool-suite-3.9.15.RELEASE-e4.16.0-win32-x86_64', 349, '2021-04-25-일요일 오전 7:50', 189],
    ['zip', 'apache-maven-3.8.1-bin', 152, '2021-04-23-금요일 오후 8:36', 189],
  ] },
];

const FW = '펌웨어 구현', DD = '디바이스 드라이버 구현', EM = '임베디드 애플리케이션 구현';
const RQ = '요구사항 확인', AD = '애플리케이션 설계', IF = '인터페이스 구현';
const units: Record<number, [number, string, boolean?]> = {
  0: [3, FW], 3: [4, FW], 4: [5, FW, true], 5: [1, DD], 6: [2, DD], 7: [3, DD], 10: [4, DD], 11: [5, DD, true],
  12: [1, EM], 13: [2, EM], 14: [3, EM], 17: [4, EM], 18: [5, EM, true], 19: [1, RQ], 20: [2, RQ], 21: [3, RQ],
  24: [4, RQ], 25: [5, RQ, true], 26: [1, AD], 27: [2, AD], 28: [3, AD], 31: [4, AD], 32: [5, AD, true],
  34: [1, IF], 35: [2, IF], 38: [3, IF], 39: [4, IF], 40: [5, IF], 41: [6, IF], 42: [7, IF], 45: [8, IF],
  46: [9, IF], 48: [10, IF, true],
};
const holidays: Record<number, string> = { 33: '어린이날', 47: '부처님 오신 날' };
const weekdays = ['금', '토', '일', '월', '화', '수', '목'];

function CalendarRows() {
  const out: ReactNode[] = [];
  for (let i = 0; i < 49; i++) {
    const day = i < 29 ? i + 2 : i - 28;
    const wd = weekdays[i % 7];
    const r = i + 3;
    const thick = i === 2 || i === 9 || i === 28;
    const bg = wd === '토' ? '#4f81bd' : wd === '일' || holidays[i] ? '#c0504d' : undefined;
    const fg = bg ? '#f3dfe2' : undefined;
    out.push(<Cell key={`d${i}`} $c={2} $r={r} $bg={bg} $fg={fg} $thick={thick}>{day}</Cell>);
    out.push(<Cell key={`w${i}`} $c={3} $r={r} $bg={bg} $fg={fg} $thick={thick}>{wd}</Cell>);
    if (bg) {
      out.push(<Cell key={`m${i}`} $c={4} $cs={3} $r={r} $bg={bg} $fg={fg} $thick={thick}>{holidays[i]}</Cell>);
      continue;
    }
    const [n, unit, exam] = units[i];
    out.push(<Cell key={`n${i}`} $c={4} $r={r} $thick={thick}>{n}</Cell>);
    out.push(<Cell key={`u${i}`} $c={5} $r={r} $thick={thick}>{unit}</Cell>);
    out.push(
      <Cell key={`s${i}`} $c={6} $r={r} $thick={thick} $b={exam} $fg={exam ? '#111' : undefined}>
        {exam ? `이수자 평가 (${unit})` : i > 26 ? 'Spring' : null}
      </Cell>,
    );
  }
  return <>{out}</>;
}

const green = '#e2efda';
const CalendarSheet = () => (
  <Calendar>
    <CalTitle><Fit w={144}>2021.04.09~2021.06.18 I</Fit></CalTitle>
    {['월', '일', '요일', '일차', '능력단위', '', '', ''].map((h, i) => (
      <Cell key={i} $c={i + 1} $r={2} $bg="#d9d9d9" $b $thick $head $fg="#222">{h}</Cell>
    ))}
    <Cell $c={1} $r={3} $rs={29} $thick $b $center>4</Cell>
    <Cell $c={1} $r={32} $rs={20} $b $open $pt={225}>5</Cell>
    <CalendarRows />
    <Cell $c={7} $r={3} $rs={29} $bg={green} $thick />
    <Cell $c={7} $r={32} $rs={12} $bg={green} $thick $center>DB 설계</Cell>
    <Cell $c={7} $r={44} $rs={8} $bg={green} $thick $center>UML 설계</Cell>
    <Cell $c={8} $r={3} $rs={28} $rt />
    <Cell $c={8} $r={31} $thick $rt>UI 설계 제출일</Cell>
    <Cell $c={8} $r={32} $rs={11} $center $rt>
      <Spaced>1. 논리 ERD</Spaced>
      <Spaced>2. 물리 ERD</Spaced>
      <Spaced>3. 테이블 정의서</Spaced>
    </Cell>
    <Cell $c={8} $r={43} $thick $rt>DB 설계 제출일</Cell>
    <Cell $c={8} $r={44} $rs={7} $center $thick $rt>
      <div>1. 유스케이스</div><div>다이어그램</div><div>2. 시퀀스</div><div>다이어그램</div><div>3. 클래스</div><div>다이어그램</div>
    </Cell>
    <Cell $c={8} $r={51} $thick $rt>UML 설계 제출일</Cell>
  </Calendar>
);

/* ---------- Word ---------- */
const WordTitle = () => (
  <TitleArea>
    <TitleDecoration />
    <TitleRow>
      <QuickAccess>
        <svg width="105" height="18" viewBox="0 0 105 18" fill="none" stroke="#fff" strokeWidth="1.3">
          <path d="M6 15H1V2H13V6M4 2V6H10V2M8 9.5A4 4 0 0 1 14 9M14.5 6.5V9.5H11.5M14.5 12.5A4 4 0 0 1 8.5 14M8 16.5V13.5H11" />
          <path d="M30 6.5H39Q43.5 7 43 11Q42 14 37 15M34.5 2L30 6.5L34.5 11" strokeWidth="2" />
          <path d="M51 8L53.5 10.5L56 8M101 7H107M102 10L104 12.5L106 10z" strokeWidth="1" />
          <path d="M71 3.5A6 6 0 1 0 78 4M71 0V4.5H75.5" strokeWidth="2" />
        </svg>
      </QuickAccess>
      <ContextTitle><Fit w={39}>표 도구</Fit></ContextTitle>
      <DocTitle><Fit w={168}>{'두민형 1차 피드백 (1)  -  Word'}</Fit></DocTitle>
      <Account>
        <Fit w={39}>두 민형</Fit>
        <svg width="24" height="24" viewBox="0 0 24 24">
          <path d="M0 0h24v24H0z" fill="#b5b5b5" />
          <ellipse cx="12" cy="8.5" rx="5" ry="5.8" fill="#fff" />
          <path d="M3 24V19Q4 14.5 9 14.5H15Q20 14.5 21 19V24z" fill="#fff" />
        </svg>
      </Account>
      <Caption>
        <svg width="13" height="11" viewBox="0 0 13 11" fill="none" stroke="#fff"><path d="M.5.5h12v10H.5zM.5 3h12M6.5 9V5M4.5 6.5l2-2 2 2" /></svg>
        <svg width="10" height="10" viewBox="0 0 10 10"><path d="M0 5.5H10" stroke="#fff" /></svg>
        <svg width="11" height="11" viewBox="0 0 11 11" fill="none" stroke="#fff"><path d="M.5 2.5h8v8h-8zM2.5 2.5v-2h8v8h-2" /></svg>
        <svg width="11" height="11" viewBox="0 0 11 11" stroke="#fff"><path d="M.5.5l10 10M10.5.5l-10 10" /></svg>
      </Caption>
    </TitleRow>
    <TabRow>
      <Tab $w={58}>파일</Tab><Tab $w={41}>홈</Tab><Tab $w={50}>삽입</Tab><Tab $w={65}>디자인</Tab>
      <Tab $w={73} $on>레이아웃</Tab><Tab $w={52}>참조</Tab><Tab $w={50}>편지</Tab><Tab $w={52}>검토</Tab>
      <Tab $w={50}>보기</Tab><Tab $w={64}>도움말</Tab><TabGap $w={3} />
      <Tab $w={61} $ctx>디자인</Tab><Tab $w={75} $ctx>레이아웃</Tab>
      <TellMe>
        <svg width="13" height="17" viewBox="0 0 13 17" fill="none" stroke="#fff">
          <path d="M4 12Q4 10 2.5 8.5A5 5 0 1 1 10.5 8.5Q9 10 9 12zM4.5 14.5H8.5M5 16.5H8" />
        </svg>
        <Fit w={133}>어떤 작업을 원하시나요?</Fit>
      </TellMe>
      <Share>
        <svg width="15" height="17" viewBox="0 0 15 17" fill="none" stroke="#fff">
          <circle cx="7" cy="5" r="4.3" /><path d="M1 16.5Q1 10 6 9.5M11.5 8.5V16M8 12.5H15" />
        </svg>
        공유
      </Share>
    </TabRow>
  </TitleArea>
);

const LineIcon = ({ rows, up }: { rows?: boolean; up?: boolean }) => (
  <svg width="16" height="15" viewBox="0 0 16 15" fill="none" stroke="#777">
    {rows ? <path d="M7.5 2.5h8M7.5 5.5h8M7.5 10.5h8M7.5 13.5h8" /> : <path d="M0 2.5h16M8 6h8M8 9.5h8M0 13h16" />}
    {rows ? <path d="M3 1v13M.5 3.5L3 1l2.5 2.5M.5 11.5L3 14l2.5-2.5" stroke="#2f7cc4" strokeWidth="1.3" />
      : <path d={up ? 'M13 7.5H6M8.5 5L6 7.5 8.5 10' : 'M0 7.5h6M3.5 5L6 7.5 3.5 10'} stroke="#2f7cc4" strokeWidth="1.8" />}
  </svg>
);

const WordRibbon = () => (
  <Ribbon>
    <Group $w={331}>
      <GroupBody>
        <BigButton $w={58}>
          <SheetIcon w={30}>
            <path d="M1.5 0V28M6.5 0V28M11.5 0V28M16.5 18V28M21.5 18V28M26.5 18V28M0 26l1.5 2L3 26M5 26l1.5 2L8 26M10 26l1.5 2 1.5-2M15 26l1.5 2 1.5-2M20 26l1.5 2 1.5-2" />
            <text x="14" y="14" fontSize="15" fontWeight="700" fill="#2f7cc4" stroke="none">가</text>
          </SheetIcon>
          <BigLine>텍스트</BigLine><BigLine>방향<Chevron /></BigLine>
        </BigButton>
        <BigButton $w={26}>
          <SheetIcon><path d="M.5 1.5h23v27H.5z" fill="#fff" /><path d="M5.5 1v28M18.5 1v28M0 6.5h24M0 23.5h24" stroke="#2f7cc4" /></SheetIcon>
          <BigLine>여백</BigLine><BigLine><Chevron /></BigLine>
        </BigButton>
        <BigButton $w={57}>
          <SheetIcon w={30}><path d="M1.5.5h10l5 5v14h-15z" fill="#fff" /><path d="M6.5 11.5h15l6 6v11h-21z" fill="#fff" /><path d="M20 1Q27 2 26 9M22.5 6l3.5 4 3-4" stroke="#2f7cc4" strokeWidth="1.8" /></SheetIcon>
          <BigLine>용지</BigLine><BigLine>방향<Chevron /></BigLine>
        </BigButton>
        <BigButton $w={28}>
          <SheetIcon><path d="M5.5 5.5h12l6 6v17h-18z" fill="#fff" /><path d="M0 1.5h24M1.5 6v23M0 6.5h3M0 28.5h3M.5 0v3M23.5 0v3" stroke="#2f7cc4" /></SheetIcon>
          <BigLine>크기</BigLine><BigLine><Chevron /></BigLine>
        </BigButton>
        <BigButton $w={41} $ml={8}>
          <SheetIcon><path d="M.5 1.5h23v27H.5z" fill="#fff" /><path d="M4 8.5h7M13 8.5h7M4 12.5h7M13 12.5h7M4 16.5h7M13 16.5h7M4 20.5h7M13 20.5h7" stroke="#2f7cc4" /></SheetIcon>
          <BigLine>단</BigLine><BigLine><Chevron /></BigLine>
        </BigButton>
        <SmallColumn $pad={3}>
          <SmallRow>
            <svg width="17" height="17" viewBox="0 0 17 17" fill="none" stroke="#6a6a6a"><path d="M4.5 0V5.5H15.5V0M4.5 17V10.5H15.5V17" fill="#fff" /><path d="M0 5.5l3 2.5-3 2.5M5 8h11" stroke="#2f7cc4" /></svg>
            나누기<Chevron />
          </SmallRow>
          <SmallRow>
            <svg width="17" height="17" viewBox="0 0 17 17" fill="none" stroke="#6a6a6a"><path d="M6.5 2.5h6l3 3v10h-9z" fill="#fff" /><path d="M2.5 1v4M1 7.5h3v2H1v2h3M1 13.5h3v3H1" stroke="#2f7cc4" /></svg>
            줄 번호<Chevron />
          </SmallRow>
          <SmallRow>
            <svg width="17" height="17" viewBox="0 0 17 17" fill="#555"><text x="4" y="7" fontSize="9">a-</text><text x="0" y="16" fontSize="11">bc</text></svg>
            하이픈 넣기<Chevron />
          </SmallRow>
        </SmallColumn>
      </GroupBody>
      <GroupFoot><span /><Fit w={64}>페이지 설정</Fit><Launcher /></GroupFoot>
    </Group>
    <Group $w={58}>
      <GroupBody>
        <BigButton $w={58}>
          <SheetIcon><path d="M.5.5h16l7 7v22H.5z" fill="#cfe0f5" stroke="#3a6db0" /><path d="M3 10.5h18M3 14.5h18M3 18.5h18M3 22.5h18M3 26.5h18M7.5 8v20M12 8v20M16.5 8v20" stroke="#7fa0cc" /></SheetIcon>
          <BigLine>원고지</BigLine><BigLine>설정</BigLine>
        </BigButton>
      </GroupBody>
      <GroupFoot><span /><span>원고지</span><span /></GroupFoot>
    </Group>
    <Group $w={282}>
      <GroupBody $pad={8}>
        <FieldColumn $w={145}>
          <FieldTitle>들여쓰기</FieldTitle>
          <FieldRow $label={44}><LineIcon /><span>왼쪽:</span><Spin>0 글자<Spinner /></Spin></FieldRow>
          <FieldRow $label={44}><LineIcon up /><Fit w={40}>오른쪽:</Fit><Spin>0 글자<Spinner /></Spin></FieldRow>
        </FieldColumn>
        <FieldColumn $w={122}>
          <FieldTitle>간격</FieldTitle>
          <FieldRow $label={20}><LineIcon rows /><span>앞:</span><Spin>0 줄<Spinner /></Spin></FieldRow>
          <FieldRow $label={20}><LineIcon rows /><span>뒤:</span><Spin>0 줄<Spinner /></Spin></FieldRow>
        </FieldColumn>
      </GroupBody>
      <GroupFoot><span /><span>단락</span><Launcher /></GroupFoot>
    </Group>
    <Group $w={355}>
      <GroupBody $pad={8}>
        <BigButton $w={42} $off>
          <SheetIcon off><path d="M.5 1.5h23v27H.5zM3 4.5h18M3 7.5h3M18 7.5h3M3 24.5h18M3 21.5h18M6.5 9.5h11v9h-11z" /><path d="M7 18l3.5-5 3 3 2-2 2 4z" fill="#a9a5a9" /></SheetIcon>
          <BigLine>위치</BigLine><BigLine><Chevron c="#b1b1b1" /></BigLine>
        </BigButton>
        <BigButton $w={55} $off>
          <SheetIcon off><path d="M1.5.5h14l6 6v22h-20zM4 9.5h15M4 25.5h15M4 22.5h3M16 22.5h3M4 6.5h9" /><path d="M8 20Q8 14 11.5 14T15 20" stroke="#a9a5a9" strokeWidth="3" /></SheetIcon>
          <BigLine>텍스트</BigLine><BigLine>줄 바꿈<Chevron c="#b1b1b1" /></BigLine>
        </BigButton>
        <BigButton $w={67} $off>
          <SheetIcon off w={27}><path d="M10.5 12.5h16v16h-16z" /><path d="M.5 1.5h19v19H.5z" fill="#dcd5dc" /></SheetIcon>
          <BigLine>앞으로</BigLine><BigLine>가져오기<Chevron c="#b1b1b1" /></BigLine>
        </BigButton>
        <BigButton $w={51} $off>
          <SheetIcon off w={27}><path d="M.5 1.5h19v19H.5z" fill="#dcd5dc" /><path d="M10.5 12.5h16v16h-16z" fill="#f3f3f3" /></SheetIcon>
          <BigLine>뒤로</BigLine><BigLine>보내기<Chevron c="#b1b1b1" /></BigLine>
        </BigButton>
        <BigButton $w={49}>
          <SheetIcon w={27}><path d="M9 8h14v12H9z" fill="#f0c987" stroke="none" /><path d="M.5.5h12v13H.5zM.5 15.5h12v12H.5z" fill="#fff" /><path d="M18.5 14v14l3-3 2 4 2-1-2-4h4z" fill="#fff" /></SheetIcon>
          <BigLine>선택 창</BigLine>
        </BigButton>
        <SmallColumn $pad={1}>
          <SmallRow>
            <svg width="17" height="16" viewBox="0 0 17 16" fill="none"><path d="M4.5 0v16" stroke="#6a6a6a" /><path d="M7 2h7v6H7z" fill="#f0c987" /><path d="M5 1.5h6" stroke="#6a6a6a" /><path d="M14 12.5H6M9 9.5l-3 3 3 3" stroke="#2f7cc4" strokeWidth="1.5" /></svg>
            맞춤<Chevron />
          </SmallRow>
          <SmallRow $off>
            <svg width="17" height="16" viewBox="0 0 17 16" fill="none" stroke="#b9b9b9"><path d="M1 2.5h14v11H1zM4 5.5h6v5H4zM8 7.5h5v4H8M0 1h2v2H0zM14 1h2v2h-2zM0 13h2v2H0zM14 13h2v2h-2z" /></svg>
            그룹화<Chevron c="#b1b1b1" />
          </SmallRow>
          <SmallRow $off>
            <svg width="17" height="16" viewBox="0 0 17 16" fill="none" stroke="#b9b9b9"><path d="M8.5 3v11H1z" /><path d="M11 3v11h5z" fill="#b9b9b9" /></svg>
            회전<Chevron c="#b1b1b1" />
          </SmallRow>
        </SmallColumn>
      </GroupBody>
      <GroupFoot><span /><span>정렬</span><span /></GroupFoot>
    </Group>
    <CollapseRibbon><Chevron d="up" s={11} c="#555" /></CollapseRibbon>
  </Ribbon>
);

const essay: [string, number, boolean?][] = [
  ['전체적인 업무의 흐름을 잘 읽어내 좋은 성과를 내는 편입니다. 전 직장에 재직 중일 때 새로운', 841],
  ['장비나 시스템 도입 시 다들 사원들보다 먼저 도맡아 빠르게 학습 후 팀 업무에 정착시키는 역할', 841],
  ['을 자주 해왔습니다. 그 결과 우수사원 상과 좋은 인사평가를 받아왔습니다. ', 660, true],
  ['하지만 완벽주의 성향이 강해 문제 해결 시 요령 없이 진행하다 보니 시간이 꽤 지체되거나 쉽고', 841],
  ['간단한 문제를 더 어렵게 접근해 스트레스를 받곤 했습니다. 이런 저의 단점들을 오래전부터 인지', 840],
  ['해왔고 개선하기 위해 일찍부터 부지런히 업무를 시작해 시간적 여유를 갖는 방법과 주변의 가르', 841],
  ['침과 조언들을 잘 흡수해 더욱 깔끔하게 업무를 수행하는 노력을 기울이고 있습니다.', 729, true],
];
const goals: [ReactNode, number, boolean?, number?][] = [
  ['3단계의 목표를 설정해 순차적으로 이루어 나갈 것입니다.', 398, true],
  [null, 0, true, 14],
  ['1단계 연착륙 – 입사 후 사내 문화 및 분위기에 빠르게 녹아들 수 있도록 노력을 기울일 것입니다. 동시에 업무의 전체적', 847],
  [<>흐름을 파악하고 저의 역량의 맞는 수행 가능한 업무를 하나 <Wavy $c="#2f66e8">둘 씩</Wavy> 늘려가며 생산성 있는 신입 사원이 될 것입니다.</>, 799, true],
  [null, 0, true],
  ['2단계 내실 다지기 – 업무의 원활한 수행은 물론 프로그래밍 기본에 충실하여 문제 발생 시 정확한 원인을 파악하고', 805, true],
  ['해결할 수 있는 역량을 갖출 것입니다. 코딩을 한다고 바로 개발자가 된다고 생각하지 않습니다. 소위 뼈속까지 개발자가', 847],
  ['되기 위해 밑바탕을 탄탄하게 다질 것이며 그러기 위해 퇴근 후와 휴일에 이론서, 기본서, 인터넷강의 등으로 내실을 채워', 847],
  ['나갈 것이고, 어떤 상황에서도 쉽게 흔들리지 않는 개발자가 될 것입니다.', 504, true],
  [null, 0, true],
  [<>3단계 핵심 인재 – 탄탄한 밑바탕에 업무 경험들을 <Wavy $c="#e02020">쌓아올려</Wavy> 중요한 프로젝트에 핵심 역할을 담당하게 되고 훌륭히 수행</>, 847],
  ['해 개인의 발전을 넘어 회사의 발전까지 이뤄내는 (회사명)의 에이스가 될 것입니다.', 578, true],
];
const SidePad = styled.div<{ $h: number }>`
  height: ${p => p.$h}px;
`;

const WordDocument = () => (
  <Workspace>
    <Page>
      <TableLine>
        <DocTable $w={970} $h={279} $side={107}>
          <SideCell>
            <SidePad $h={72} />
            <SideLine><Fit w={55}>성격의</Fit><Return /></SideLine>
            <SideLine><Fit w={62}>장/단점</Fit><Return /></SideLine>
          </SideCell>
          <TextCell>
            {essay.map(([t, w, end], i) => (
              <Line key={i} $h={32.15}><Fit w={w} words>{t}</Fit>{end && <Return w={12} h={12} />}</Line>
            ))}
          </TextCell>
        </DocTable>
        <RowMarks $top={14}><Return w={11} h={12} /></RowMarks>
        <MoveHandle>
          <svg width="13" height="13" viewBox="0 0 13 13" fill="none" stroke="#444"><path d="M6.5 1v11M1 6.5h11M5 2.5l1.5-1.5L8 2.5M5 10.5L6.5 12 8 10.5M2.5 5L1 6.5 2.5 8M10.5 5L12 6.5 10.5 8" /></svg>
        </MoveHandle>
      </TableLine>
      <BetweenTables><Return w={4} h={5} /></BetweenTables>
      <TableLine>
        <DocTable $w={974} $h={375} $side={106} $top>
          <SideCell>
            <SidePad $h={165} />
            <SideLine><Fit w={36}>목표</Fit><Return /></SideLine>
          </SideCell>
          <div>
            <GoalHead><Line $h={42}><Fit w={726} words>입사 후 이루고 싶은 목표가 무엇이고 그 목표를 이루기 위해 어떠한 노력을 할 계획 인가요?</Fit><Return w={12} h={12} /></Line></GoalHead>
            <GoalBody>
              {goals.map(([t, w, end, indent], i) => (
                <Line key={i} $h={25.76} $in={indent}>
                  {t && <Fit w={w} words>{t}</Fit>}
                  {end && <Return w={9} h={9} />}
                </Line>
              ))}
            </GoalBody>
          </div>
        </DocTable>
        <RowMarks $top={11} $gap={32}><Return w={11} h={12} /><Return w={11} h={12} /></RowMarks>
        <SizeHandle />
      </TableLine>
      <Tail><Return w={10} h={10} /><Return w={20} h={17} /><Return w={20} h={17} /><Return w={20} h={17} /></Tail>
    </Page>
  </Workspace>
);

const WordStatus = () => (
  <StatusBar>
    <StatusLeft>
      <Fit w={57}>2/8 페이지</Fit>
      <Fit w={60}>746개 단어</Fit>
      <svg width="14" height="13" viewBox="0 0 14 13" fill="none" stroke="#666"><path d="M.5.5h4q2 0 2 2v10q0-1.5-2-1.5h-4zM6.5 2.5q0-2 2-2h4v3M9 5l4 6M13 5l-4 6M6.5 12.5q2 0 2-1.5" /></svg>
      <Fit w={35}>한국어</Fit>
    </StatusLeft>
    <ViewButton><svg width="13" height="13" viewBox="0 0 13 13" fill="none" stroke="#666"><path d="M.5 1.5h5l1 1 1-1h5V11h-5l-1 1.5-1-1.500h-5zM6.5 2v11M2 4h3M2 6h3M2 8h3M8 4h3M8 6h3M8 8h3" /></svg></ViewButton>
    <ViewButton $on><svg width="14" height="13" viewBox="0 0 14 13" fill="none" stroke="#555"><path d="M.5.5h13v12H.5zM3 3h8M3 5h8M3 7h8M3 9h8M3 11h8" /></svg></ViewButton>
    <ViewButton><svg width="14" height="13" viewBox="0 0 14 13" fill="none" stroke="#666"><path d="M6 11.5H.5V.5h11V5M3 3h6M3 5h6M3 7h4M3 9h3" /><circle cx="10" cy="9" r="3.5" fill="#777" /></svg></ViewButton>
    <Zoom>
      <svg width="127" height="13" viewBox="0 0 127 13"><path d="M0 5.5h8M118 5.5h9M122.5 1.5v9" stroke="#444" /><path d="M13 6.5h100M63.5 3v7" stroke="#a6a6a6" /><path d="M66 1h5v11h-5z" fill="#555" /></svg>
    </Zoom>
    <PercentText><Fit w={30}>140%</Fit></PercentText>
  </StatusBar>
);

/* ---------- explorer ---------- */
const ExplorerWindow = () => (
  <Explorer>
    <ExTitle>
      <DownArrow /><ExDivider $l={7} $r={11} />
      <svg width="12" height="16" viewBox="0 0 12 16"><path d="M.5.5h8l3 3v12H.5z" fill="#fff" stroke="#888" /><path d="M3 9l2.5 3L9.5 6" fill="none" stroke="#e8641c" strokeWidth="1.6" /></svg>
      <TabGap $w={10} />
      <svg width="13" height="16" viewBox="0 0 13 16"><path d="M0 0h12v16H0z" fill="#ffe08a" /><path d="M11 10l2-1v7h-2z" fill="#e9bb4a" /></svg>
      <TabGap $w={9} />
      <svg width="6" height="7" viewBox="0 0 6 7"><path d="M0 0h6v1H0zM0 3h6L3 6.5z" fill="#222" /></svg>
      <ExDivider $l={8} $r={8} />
      <Fit w={55}>다운로드</Fit>
      <ExWinButtons>
        <svg width="10" height="10" viewBox="0 0 10 10"><path d="M0 5.5h10" stroke="#888" /></svg>
        <svg width="10" height="10" viewBox="0 0 10 10" fill="none" stroke="#888"><path d="M.5.5h9v9h-9z" /></svg>
        <svg width="10" height="10" viewBox="0 0 10 10" stroke="#888"><path d="M0 0l10 10M10 0L0 10" /></svg>
      </ExWinButtons>
    </ExTitle>
    <ExTabs>
      <ExTab $w={56} $on>파일</ExTab><ExTab $w={41}>홈</ExTab><ExTab $w={52}>공유</ExTab><ExTab $w={52}>보기</ExTab>
      <ExTabsEnd>
        <Chevron s={9} c="#888" />
        <svg width="16" height="16" viewBox="0 0 16 16"><circle cx="8" cy="8" r="8" fill="#0a5cb0" /><path d="M5.5 6Q5.5 3.5 8 3.5T10.5 6Q10.5 7.5 8 8.5V10M8 11.5v1.5" fill="none" stroke="#fff" strokeWidth="1.5" /></svg>
      </ExTabsEnd>
    </ExTabs>
    <AddressRow>
      <NavArrows>
        <svg width="86" height="13" viewBox="0 0 86 13" fill="none">
          <path d="M13 6.5H1M6 1.5L1 6.5L6 11.5" stroke="#6a6a6a" strokeWidth="1.6" />
          <path d="M29 6.5H41M36 1.5L41 6.5L36 11.5" stroke="#d2d2d2" strokeWidth="1.6" />
          <path d="M56.5 4.5L59 7.5L61.5 4.5" stroke="#888" strokeWidth="1.6" />
          <path d="M80 13V1M75 6L80 1L85 6" stroke="#6a6a6a" strokeWidth="1.6" />
        </svg>
      </NavArrows>
      <AddressBox>
        <DownArrow /><TabGap $w={8} />
        <Chevron d="right" s={7} /><Crumb><Fit w={35}>내 PC</Fit></Crumb>
        <Chevron d="right" s={7} /><Crumb><Fit w={55}>다운로드</Fit></Crumb>
        <Chevron d="right" s={7} />
        <AddressEnd>
          <BoldChevron d="down" />
          <Refresh><svg width="12" height="13" viewBox="0 0 12 13" fill="none" stroke="#777" strokeWidth="1.6"><path d="M8.5 2.8A4.5 4.5 0 1 1 3 3M3.5 0.5V4H7" transform="rotate(10 6 6)" /></svg></Refresh>
        </AddressEnd>
      </AddressBox>
      <ExSearch><Magnifier c="#888" s={15} /><Fit w={88}>다운로드 검색</Fit></ExSearch>
    </AddressRow>
    <ExBody>
      <NavPane>
        {navItems.map(([k, t, w], i) => (
          <NavItem key={i} $root={k === 'pc'} $on={k === 'down'}><FileIcon k={k} /><Fit w={w}>{t}</Fit></NavItem>
        ))}
      </NavPane>
      <VScroll $w={16} $h={355} $top={64} $len={251}><BoldChevron d="up" /><BoldChevron d="down" /></VScroll>
      <ListArea>
        <ListTop>
          <List>
            <ListHead>
              <HeadName><Fit w={27}>이름</Fit></HeadName>
              <HeadDate><Fit w={75}>수정한 날짜</Fit><Chevron s={8} c="#888" /></HeadDate>
            </ListHead>
            {fileGroups.map((g, gi) => (
              <React.Fragment key={gi}>
                <GroupRow $first={gi === 0}><Chevron s={11} c="#777" /><Fit w={g.w}>{g.title}</Fit></GroupRow>
                {g.files.map(([k, name, w, date, dw], i) => (
                  <FileRow key={i}><FileIcon k={k} /><Fit w={w}>{name}</Fit><FileDate><Fit w={dw}>{date}</Fit></FileDate></FileRow>
                ))}
              </React.Fragment>
            ))}
          </List>
          <VScroll $w={15} $h={338} $top={17} $len={73}><BoldChevron d="up" /><BoldChevron d="down" /></VScroll>
        </ListTop>
        <HScroll><BoldChevron d="left" /><BoldChevron d="right" /></HScroll>
      </ListArea>
    </ExBody>
    <ExStatus>
      <Fit w={54}>48개 항목</Fit><ExDivider $l={11} $r={839} />
      <ViewIcon $on><svg width="16" height="13" viewBox="0 0 16 13" fill="none"><path d="M.5.5h4v12h-4zM.5 4.5h4M.5 8.5h4" stroke="#8a8a8a" /><path d="M6 2.5h4M11 2.5h4M6 6.5h4M11 6.5h4M6 10.5h4M11 10.5h4" stroke="#555" /></svg></ViewIcon>
      <ViewIcon><svg width="14" height="12" viewBox="0 0 14 12"><path d="M.5.5h13v11H.5z" fill="#fff" stroke="#999" /><path d="M2.5 2.5h9v7h-9z" fill="#6bb0e8" /><path d="M2.5 6l9 2v1.500h-9z" fill="#2f5f50" /></svg></ViewIcon>
    </ExStatus>
  </Explorer>
);

const DesktopShortcuts = () => (
  <DesktopIcons>
    <DesktopIcon>
      <svg width="44" height="44" viewBox="0 0 44 44"><path d="M13 1l29 11v22L13 23z" fill="#cfdbe6" /><path d="M14 3l27 10v19L14 22z" fill="#2aa5f5" /><path d="M14 3l27 10L14 22z" fill="#5cc0ff" /><path d="M22 27l9 3 6 1-8 4-10-3z" fill="#b9c4cc" /><path d="M1 34l9-4 24 8-10 5z" fill="#dfe4e8" /><path d="M5 33.5l22 8M8 32l22 8M10 36l6-4M18 39l6-4" stroke="#98a3ab" /></svg>
      <Fit w={35}>내 PC</Fit>
    </DesktopIcon>
    <DesktopIcon>
      <svg width="40" height="44" viewBox="0 0 40 44"><path d="M1 6L18 1l21 4-5 34-15 4L6 40z" fill="#9aa0a5" /><path d="M1 6l23 4-5 33L6 40z" fill="#b4babf" /><path d="M1 6L18 1l21 4-15 5z" fill="#606366" /><path d="M6 34l13-3 15 4v4l-15 4L6 40z" fill="#d6dadd" /><path d="M7 24a6 6 0 0 1 4-7l3 3M18 20a6 6 0 0 1 0 8M9 28a6 6 0 0 0 6 2" fill="none" stroke="#1a85dd" strokeWidth="4" /></svg>
      <Fit w={41}>휴지통</Fit>
    </DesktopIcon>
    <DesktopIcon>
      <svg width="36" height="44" viewBox="0 0 36 44"><path d="M1 1h26v38L9 43 1 39z" fill="#f7d77a" /><path d="M1 1l8 8v34L1 39z" fill="#ffe9a6" /><path d="M13 43q0-16 10-17 13 1 13 17z" fill="#3a8d66" /><path d="M17 17h12v9l-6 6-5-6z" fill="#c99a6e" /><path d="M15 20q0-9 8-9t8 9l-3 4-2-5h-8z" fill="#2e2a28" /></svg>
      <Fit w={41}>두민형</Fit>
    </DesktopIcon>
    <DesktopIcon>
      <svg width="42" height="44" viewBox="0 0 42 44"><path d="M.5 6.5h41v30H.5z" fill="#5cc0f2" stroke="#2585bd" /><path d="M1 7h40L14 36H1z" fill="#8ad8fa" /><circle cx="12.5" cy="19" r="8" fill="#2b8fd0" stroke="#e8f6ff" /><path d="M12.5 19v-8a8 8 0 0 1 8 8z" fill="#f5a623" /><path d="M20 24h5V11h4M28 10h9v4h-9zM28 17h9v4h-9zM28 24h9v4h-9z" fill="none" stroke="#e8f6ff" strokeWidth="1.3" /><path d="M6 32.5h13M20 32.5h16" stroke="#e08c2c" /><path d="M18 31h4v3h-4z" fill="#fff" /></svg>
      <Fit w={41}>제어판</Fit>
    </DesktopIcon>
  </DesktopIcons>
);

const ClockText = ({ right }: { right: number }) => (
  <Clock $right={right}><Fit w={52}>오전 2:42</Fit><Fit w={107}>2021-05-11-화요일</Fit></Clock>
);

export default function App() {
  return (
    <Screens>
      <Global />
      <Monitor>
        <WordTitle />
        <WordRibbon />
        <WordDocument />
        <WordStatus />
        <Bar>
          <Slot><WinLogo /></Slot><Slot><Magnifier /></Slot><Slot><Cortana /></Slot><Slot><TaskView /></Slot>
          <Apps />
          <Tray><ClockText right={7} /></Tray>
        </Bar>
      </Monitor>
      <Monitor>
        <Desktop>
          <DesktopShortcuts />
          <Photo>
            <PhotoPage><CalendarSheet /></PhotoPage>
            <PhotoDivider />
          </Photo>
          <ExplorerWindow />
        </Desktop>
        <Bar>
          <Slot><WinLogo /></Slot>
          <SearchBox><Magnifier /><Fit w={223}>검색하려면 여기에 입력하십시오.</Fit></SearchBox>
          <Slot><Cortana /></Slot><Slot><TaskView /></Slot>
          <Apps />
          <Tray>
            <Chevron d="up" s={13} c="#222" />
            <TabGap $w={12} />
            <svg width="13" height="13" viewBox="0 0 13 13" fill="none" stroke="#333"><path d="M1 13A12 12 0 0 1 13 1M4 13A9 9 0 0 1 13 4.5M7 13A6 6 0 0 1 13 8" /><circle cx="11.5" cy="12" r="1.2" fill="#333" /></svg>
            <Ime>가</Ime>
            <ClockText right={18} />
            <Notice><svg width="17" height="17" viewBox="0 0 17 17"><path d="M0 0h17v13h-6l-3 4v-4H0z" fill="#000" /><path d="M3 3.5h11M3 6.5h11M3 9.5h8" stroke="#d5d5d5" /></svg></Notice>
          </Tray>
        </Bar>
      </Monitor>
    </Screens>
  );
}
